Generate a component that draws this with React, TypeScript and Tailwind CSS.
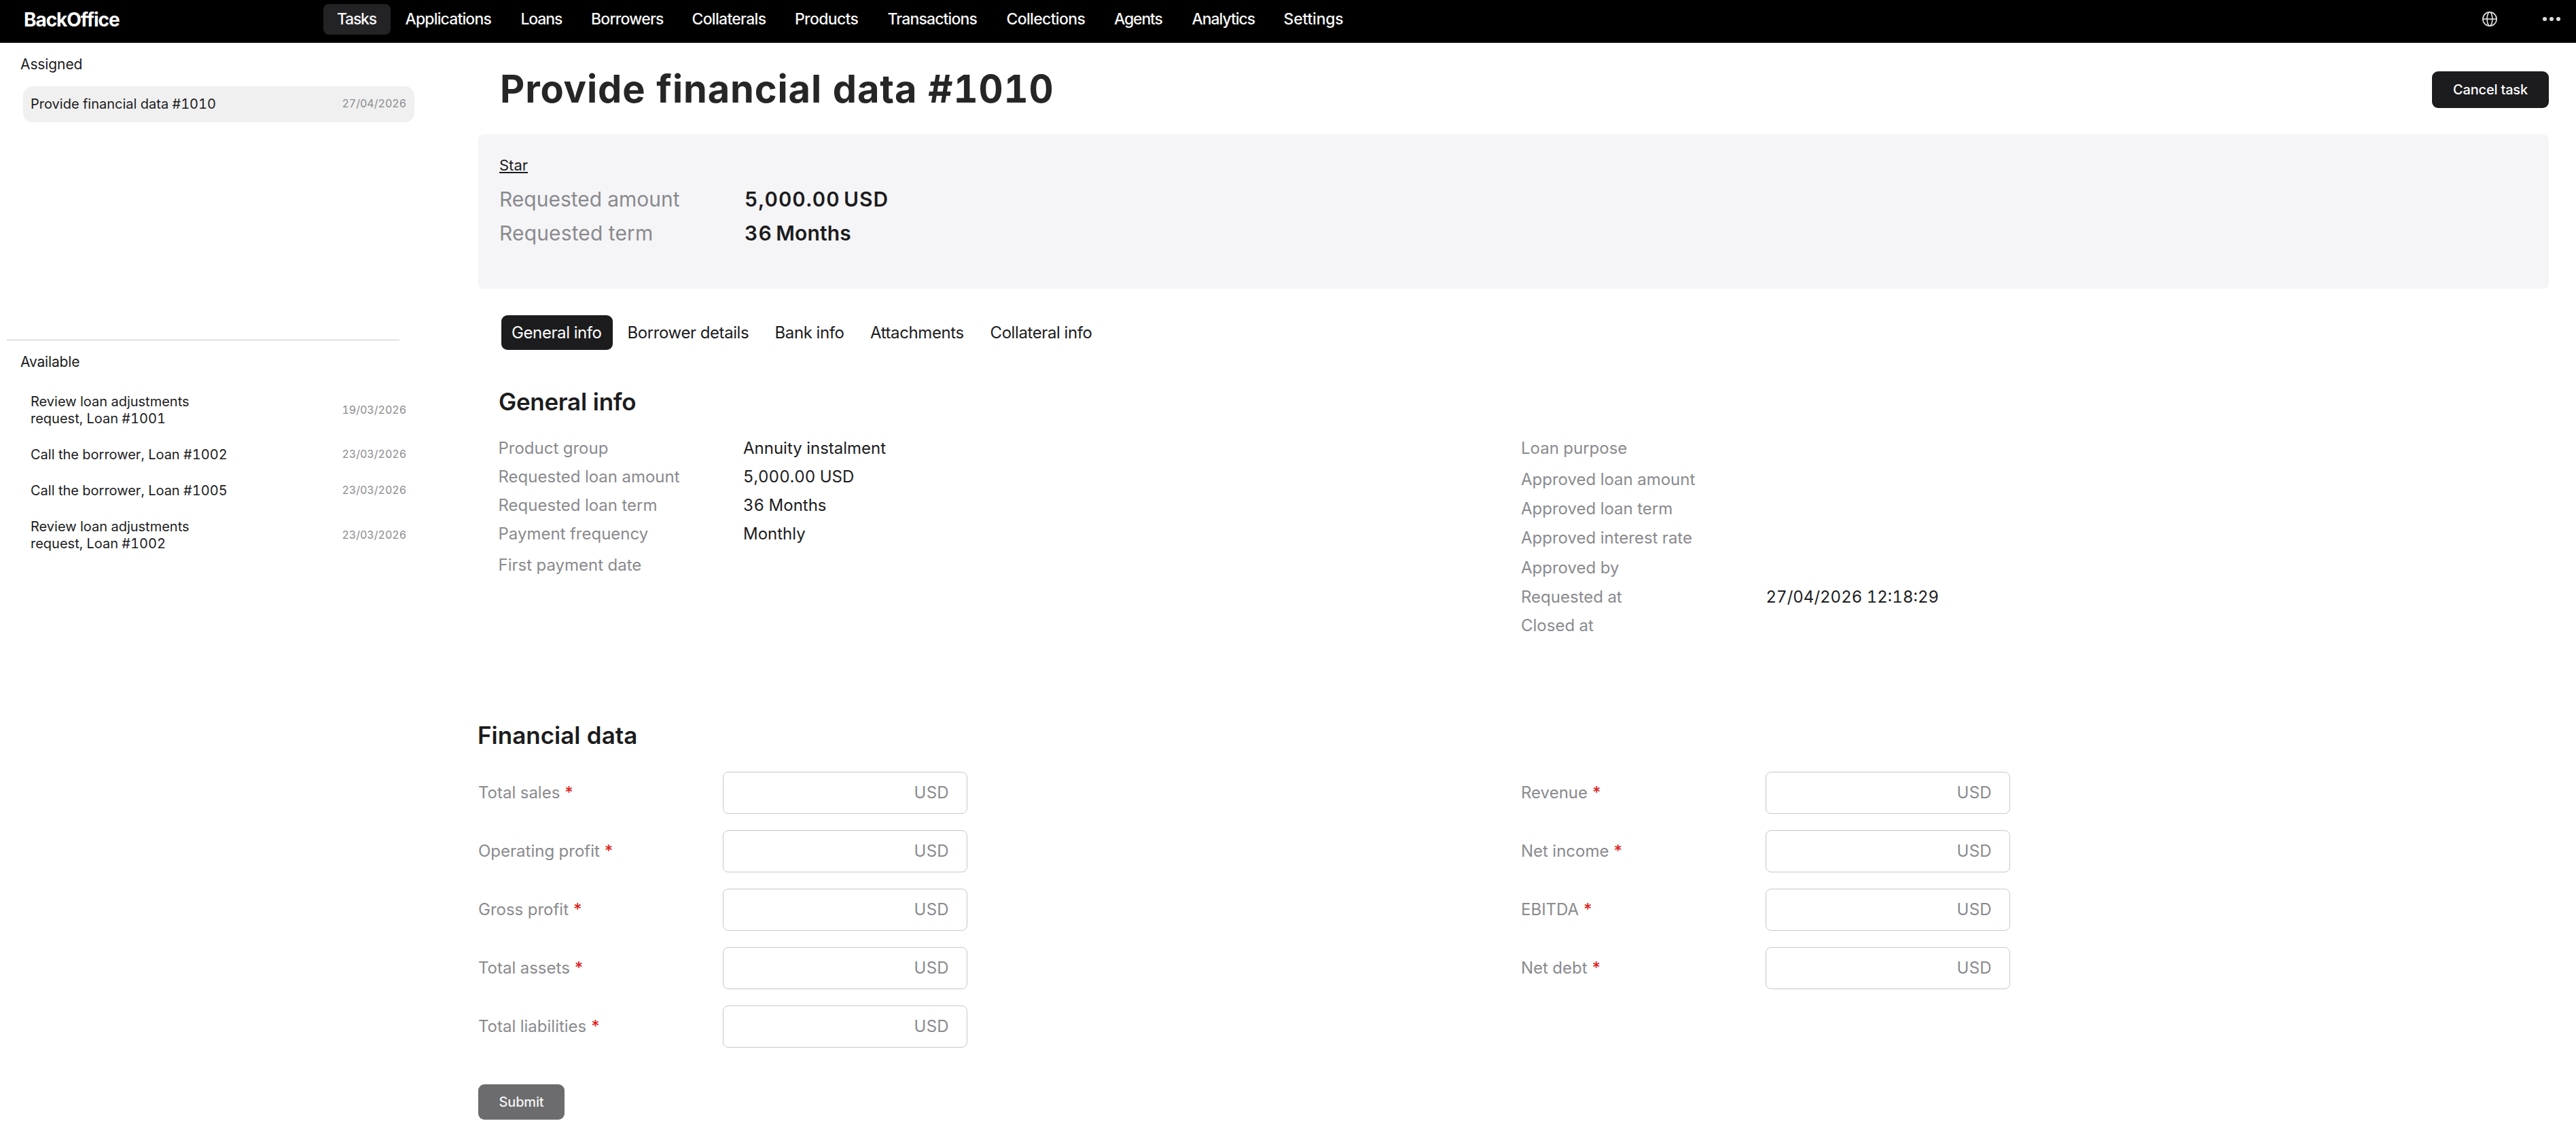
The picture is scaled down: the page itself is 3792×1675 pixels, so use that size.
import React from "react";

const nav = [
  { label: "Tasks", cls: "w-[100.5px] tracking-[-1.25px]" },
  { label: "Applications", cls: "w-[170px] tracking-[-0.85px]" },
  { label: "Loans", cls: "w-[103.5px] tracking-[-1.15px]" },
  { label: "Borrowers", cls: "w-[148.5px] tracking-[-0.77px]" },
  { label: "Collaterals", cls: "w-[151.5px] tracking-[-0.7px]" },
  { label: "Products", cls: "w-[136.5px] tracking-[-0.64px]" },
  { label: "Transactions", cls: "w-[175px] tracking-[-0.87px]" },
  { label: "Collections", cls: "w-[158.5px] tracking-[-0.66px]" },
  { label: "Agents", cls: "w-[114.5px] tracking-[-1.15px]" },
  { label: "Analytics", cls: "w-[135px] tracking-[-1.05px]" },
  { label: "Settings", cls: "w-[120px] tracking-[-0.2px]" },
];

function GlobeIcon() {
  return (
    <svg width="22" height="22" viewBox="0 0 22 22" fill="none" stroke="#dcdcde" strokeWidth="1.7">
      <circle cx="11" cy="11" r="10.1" />
      <ellipse cx="11" cy="11" rx="3.9" ry="10.1" />
      <path d="M1 11h20" />
    </svg>
  );
}

function Header() {
  return (
    <header className="flex h-[63px] items-start bg-black pt-[6px] text-white">
      <div className="flex h-[45px] w-[476px] items-center pl-[35px] text-[28px] font-bold tracking-[-1.05px]">
        BackOffice
      </div>
      <nav className="flex text-[23px] font-medium text-[#f7f7f7]">
        {nav.map((n, i) => (
          <a key={n.label} className={`flex h-[45px] items-center ${n.cls}`}>
            {i === 0 ? (
              <span className="flex h-[45px] w-[98.5px] items-center rounded-[8px] bg-[#232325] pb-[1px] pl-[20px]">
                {n.label}
              </span>
            ) : (
              <span className="pb-[1px] pl-[20px]">{n.label}</span>
            )}
          </a>
        ))}
      </nav>
      <div className="ml-auto flex h-[44px] items-center pr-[23px]">
        <GlobeIcon />
        <svg className="ml-[67px]" width="26" height="6" viewBox="0 0 26 6" fill="#dcdcde">
          <circle cx="3" cy="3" r="3" />
          <circle cx="13" cy="3" r="3" />
          <circle cx="23" cy="3" r="3" />
        </svg>
      </div>
    </header>
  );
}

const available = [
  { lines: ["Review loan adjustments", "request, Loan #1001"], date: "19/03/2026", cls: "h-[78px]" },
  { lines: ["Call the borrower, Loan #1002"], date: "23/03/2026", cls: "h-[53px]" },
  { lines: ["Call the borrower, Loan #1005"], date: "23/03/2026", cls: "h-[53px]" },
  { lines: ["Review loan adjustments", "request, Loan #1002"], date: "23/03/2026", cls: "h-[78px]" },
];

function Task({ lines, date, cls }: { lines: string[]; date: string; cls: string }) {
  return (
    <li
      className={`ml-[34px] flex w-[576px] items-center justify-between rounded-[14px] pr-[12px] pb-[1px] pl-[11px] text-[20px] leading-[25px] ${cls}`}
    >
      <div>
        {lines.map((l) => (
          <div key={l}>{l}</div>
        ))}
      </div>
      <span className="pb-[1px] text-[16px] text-[#8a8a8e]">{date}</span>
    </li>
  );
}

function Sidebar() {
  return (
    <aside className="w-[704px] shrink-0">
      <section className="h-[437px] pt-[17px]">
        <h2 className="pl-[30px] text-[21px] leading-[30px] tracking-[-0.1px]">Assigned</h2>
        <ul className="mt-[17px]">
          <Task lines={["Provide financial data #1010"]} date="27/04/2026" cls="h-[53px] bg-[#f0f0f0]" />
        </ul>
      </section>
      <div className="ml-[10px] h-px w-[578px] bg-[#c8c8cc]" />
      <section className="pt-[17px]">
        <h2 className="pl-[30px] text-[21px] leading-[30px] tracking-[-0.15px]">Available</h2>
        <ul className="mt-[17px]">
          {available.map((t, i) => (
            <Task key={i} {...t} />
          ))}
        </ul>
      </section>
    </aside>
  );
}

type Row = [string, string, string];

const leftRows: Row[] = [
  ["Product group", "Annuity instalment", "h-[42px]"],
  ["Requested loan amount", "5,000.00 USD", "h-[42px]"],
  ["Requested loan term", "36 Months", "h-[42px]"],
  ["Payment frequency", "Monthly", "h-[46px]"],
  ["First payment date", "", "h-[42px]"],
];

const rightRows: Row[] = [
  ["Loan purpose", "", "h-[46px]"],
  ["Approved loan amount", "", "h-[43px]"],
  ["Approved loan term", "", "h-[43px]"],
  ["Approved interest rate", "", "h-[44px]"],
  ["Approved by", "", "h-[43px]"],
  ["Requested at", "27/04/2026 12:18:29", "h-[42px]"],
  ["Closed at", "", "h-[42px]"],
];

function Rows({ rows }: { rows: Row[] }) {
  return (
    <dl className="text-[24px] leading-[42px]">
      {rows.map(([label, value, cls]) => (
        <div key={label} className={`flex ${cls}`}>
          <dt className="w-[360.5px] text-[#8a8a8e]">{label}</dt>
          <dd>{value}</dd>
        </div>
      ))}
    </dl>
  );
}

function Field({ label }: { label: string }) {
  return (
    <div className="flex h-[62px] items-center text-[24px] text-[#8a8a8e]">
      <label className="w-[360px]">
        {label} <span className="-ml-[1px] font-medium text-[#e01f1f]">*</span>
      </label>
      <div className="flex h-[62px] w-[360px] items-center justify-end rounded-[8px] border border-[#c8c8cc] bg-white pr-[26px] tracking-[0.3px]">
        USD
      </div>
    </div>
  );
}

const tabs = [
  { label: "Borrower details", cls: "w-[217px]" },
  { label: "Bank info", cls: "w-[140.5px]" },
  { label: "Attachments", cls: "w-[176.5px]" },
  { label: "Collateral info", cls: "w-[200px]" },
];

function Main() {
  return (
    <main className="w-[3048px]">
      <div className="flex h-[135px] justify-between pt-[42px]">
        <h1 className="pl-[32px] text-[56px] leading-[52px] font-bold tracking-[0.85px] text-[#262626]">
          Provide financial data #1010
        </h1>
        <button className="flex h-[54px] w-[172px] items-center justify-center rounded-[9px] bg-[#1c1c1e] text-[20px] font-medium tracking-[-0.2px] text-white">
          Cancel task
        </button>
      </div>

      <section className="h-[227px] rounded-[8px] bg-[#f5f5f7] pt-[29px] pl-[31px]">
        <a className="block text-[22px] leading-[32px] underline decoration-2 underline-offset-[2px]">Star</a>
        <dl className="mt-[9px] text-[30px] leading-[50px]">
          <div className="flex">
            <dt className="w-[361px] text-[#8a8a8e]">Requested amount</dt>
            <dd className="flex gap-[5.5px] font-semibold">
              <span className="tracking-[1px]">5,000.00</span>
              <span className="tracking-[0.9px]">USD</span>
            </dd>
          </div>
          <div className="flex">
            <dt className="w-[361px] tracking-[0.15px] text-[#8a8a8e]">Requested term</dt>
            <dd className="flex gap-[5.5px] font-semibold">
              <span className="tracking-[1px]">36</span>
              <span className="tracking-[0.1px]">Months</span>
            </dd>
          </div>
        </dl>
      </section>

      <div className="mt-[39px] ml-[34px] flex h-[51px] text-[24px] tracking-[-0.4px]">
        <a className="flex w-[164px] items-center rounded-[9px] bg-[#1c1c1e] pl-[15px] text-white">General info</a>
        {tabs.map((t) => (
          <a key={t.label} className={`flex items-center pl-[21.5px] ${t.cls}`}>
            {t.label}
          </a>
        ))}
      </div>

      <section className="h-[545px] pt-[53px] pl-[29.5px]">
        <h2 className="pl-[0.5px] text-[35px] leading-[46px] font-semibold tracking-[-0.3px]">General info</h2>
        <div className="mt-[25px] grid grid-cols-[1505.5px_auto]">
          <Rows rows={leftRows} />
          <Rows rows={rightRows} />
        </div>
      </section>

      <section>
        <h2 className="-ml-[1px] text-[35px] leading-[44px] font-semibold">Financial data</h2>
        <div className="mt-[32px] grid grid-cols-[1535px_auto]">
          <div className="flex flex-col gap-[24px]">
            {["Total sales", "Operating profit", "Gross profit", "Total assets", "Total liabilities"].map((l) => (
              <Field key={l} label={l} />
            ))}
          </div>
          <div className="flex flex-col gap-[24px]">
            {["Revenue", "Net income", "EBITDA", "Net debt"].map((l) => (
              <Field key={l} label={l} />
            ))}
          </div>
        </div>
        <button className="mt-[54px] flex h-[52px] w-[127px] items-center justify-center rounded-[9px] bg-[#6c6c6e] text-[20px] font-medium tracking-[-0.15px] text-[#f4f4f4]">
          Submit
        </button>
      </section>
    </main>
  );
}

export default function App() {
  return (
    <div className="h-[1675px] w-[3792px] overflow-hidden bg-white font-['Inter',sans-serif] text-[#1c1c1e] tabular-nums">
      <Header />
      <div className="flex">
        <Sidebar />
        <Main />
      </div>
    </div>
  );
}
